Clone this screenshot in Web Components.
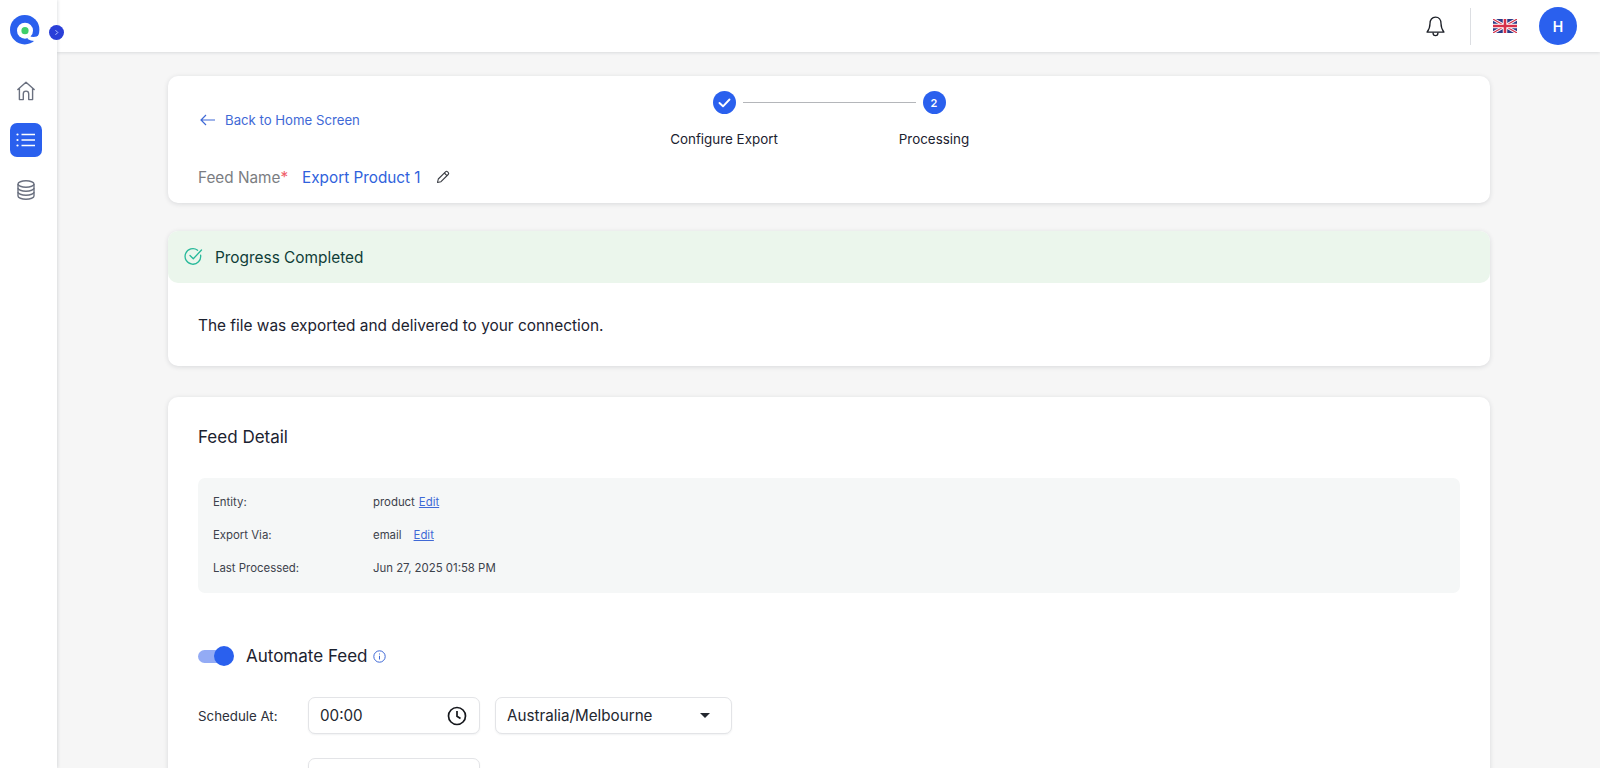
<!DOCTYPE html>
<html lang="en">
<head>
<meta charset="utf-8">
<title>Export Feed</title>
<style>
html,body{margin:0;height:768px;overflow:hidden;background:#f6f6f6;font-family:Inter,"Liberation Sans",sans-serif;color:#1c2230}
</style>
</head>
<body>
<app-shell>
  <app-sidebar slot="side"></app-sidebar>
  <app-topbar slot="top"></app-topbar>
  <header-card></header-card>
  <progress-card></progress-card>
  <detail-card></detail-card>
</app-shell>
<script>
function def(name, html){
  customElements.define(name, class extends HTMLElement{
    constructor(){super();this.attachShadow({mode:'open'}).innerHTML=html;}
  });
}
const card=':host{display:block;background:#fff;border-radius:10px;box-shadow:0 1px 5px rgba(20,30,50,.13)}';

def('app-shell',`<style>
:host{display:grid;grid-template-columns:57px 1fr;height:768px;overflow:hidden}
.main{display:flex;flex-direction:column;min-width:0;height:768px;overflow:hidden}
.content{display:flex;flex-direction:column;padding:24px 110px 0 111px}
::slotted(*){flex:none}
.content ::slotted(header-card){margin-bottom:28px}
.content ::slotted(progress-card){margin-bottom:31px}
</style>
<slot name="side"></slot>
<div class="main"><slot name="top"></slot><div class="content"><slot></slot></div></div>`);

def('app-sidebar',`<style>
:host{display:flex;flex-direction:column;align-items:center;width:57px;height:768px;background:#fff;box-shadow:1px 0 3px rgba(20,30,50,.12);position:relative;z-index:3;box-sizing:border-box;padding-top:15px}
.logo{width:30px;height:30px;margin-left:-7px;display:block}
.expand{position:absolute;left:49px;top:25px;width:15px;height:15px;border-radius:50%;background:#2a3fd8;display:grid;place-items:center}
.icon{display:grid;place-items:center;margin-left:-5px}
.home{margin-top:30px;width:32px;height:32px}
.active{margin-top:16px;width:32px;height:34px;background:#2a60ee;border-radius:7px;margin-left:-6px}
.db{margin-top:17px;width:32px;height:32px}
</style>
<svg class="logo" viewBox="0 0 30 30"><circle cx="14.700" cy="14.700" r="14.700" fill="#2a60ee"/><circle cx="15" cy="15.700" r="8" fill="#fff"/><path d="M19 20.500Q24 24 30 19.500L29.500 24.500Q24 27.500 17.500 24Z" fill="#fff"/><path d="M26.500 26.500 30 23V30H20Z" fill="#fff"/><circle cx="15" cy="15.700" r="3.600" fill="#3fcf6a"/></svg>
<div class="expand"><svg width="7" height="7" viewBox="0 0 7 7"><path d="M2.500 1.200 4.800 3.500 2.500 5.800" fill="none" stroke="#b9c6ff" stroke-width="1"/></svg></div>
<div class="icon home"><svg width="20" height="20" viewBox="0 0 20 20"><path d="M1.800 8.500 10 1.300l8.200 7.200M3.400 7.300V18.600H7.300V12.800a2.700 2.700 0 0 1 5.400 0V18.600H16.600V7.300" fill="none" stroke="#6b7180" stroke-width="1.400" stroke-linejoin="round" stroke-linecap="round"/></svg></div>
<div class="icon active"><svg width="20" height="16" viewBox="0 0 20 16"><path d="M5.500 2.500H19M5.500 8H19M5.500 13.500H19" stroke="#fff" stroke-width="1.300"/><circle cx="1.500" cy="2.500" r="1.100" fill="#fff"/><circle cx="1.500" cy="8" r="1.100" fill="#fff"/><circle cx="1.500" cy="13.500" r="1.100" fill="#fff"/></svg></div>
<div class="icon db"><svg width="18" height="20" viewBox="0 0 18 20" fill="none" stroke="#6b7180" stroke-width="1.400"><ellipse cx="9" cy="4" rx="8" ry="3.200"/><path d="M1 4v12c0 1.800 3.600 3.200 8 3.200s8-1.400 8-3.200V4"/><path d="M1 8c0 1.800 3.600 3.200 8 3.200S17 9.800 17 8M1 12c0 1.800 3.600 3.200 8 3.200s8-1.400 8-3.200"/></svg></div>`);

def('app-topbar',`<style>
:host{display:flex;align-items:center;justify-content:flex-end;flex:none;height:52px;background:#fff;box-shadow:0 1px 3px rgba(20,30,50,.12);box-sizing:border-box;padding-right:23px;position:relative;z-index:2}
.bell{display:block;margin-right:25px}
.sep{width:1px;height:37px;background:#dcdee2;margin-right:22px}
.flag{display:block;margin-right:22px}
.avatar{width:38px;height:38px;border-radius:50%;background:#2a60ee;color:#fff;display:grid;place-items:center;font-weight:600;font-size:14px}
</style>
<svg class="bell" width="19" height="21" viewBox="0 0 19 21" fill="none" stroke="#1d2028" stroke-width="1.300" stroke-linejoin="round"><path d="M9.500 1.200C6 1.200 4 4 4 7.500c0 4-1 6.200-3 8.600h17c-2-2.400-3-4.600-3-8.600 0-3.500-2-6.300-5.500-6.300z"/><path d="M7 16.400c0 2 1.100 3.200 2.500 3.200S12 18.400 12 16.400"/></svg>
<div class="sep"></div>
<svg class="flag" width="24" height="14" viewBox="0 0 24 14"><rect width="24" height="14" fill="#2b3a86"/><path d="M0 0 24 14M24 0 0 14" stroke="#fff" stroke-width="3"/><path d="M0 0 24 14M24 0 0 14" stroke="#d6304a" stroke-width="1.100"/><path d="M12 0V14M0 7H24" stroke="#fff" stroke-width="4.500"/><path d="M12 0V14M0 7H24" stroke="#d6304a" stroke-width="2.600"/></svg>
<div class="avatar">H</div>`);

def('step-tracker',`<style>
:host{display:block;width:320px;color:#1c2230}
.track{display:flex;align-items:center;padding:0 43.5px}
.dot{width:23px;height:23px;border-radius:50%;background:#2a60ee;color:#fff;display:grid;place-items:center;font-size:11px;font-weight:600;flex:none}
.line{flex:1;height:1px;background:#b4b6ba;margin:0 7px}
.labels{display:grid;grid-template-columns:110px 110px;justify-content:space-between;margin-top:16px;text-align:center;font-size:13.400px;line-height:18px}
.labels span{white-space:nowrap}
</style>
<div class="track"><div class="dot"><svg width="13" height="10" viewBox="0 0 13 10"><path d="M1.500 5 5 8.300 11.500 1.500" fill="none" stroke="#fff" stroke-width="1.900" stroke-linecap="round" stroke-linejoin="round"/></svg></div><div class="line"></div><div class="dot">2</div></div>
<div class="labels"><span>Configure Export</span><span>Processing</span></div>`);

def('header-card',`<style>${card}
:host{box-sizing:border-box;height:127px;padding:15px 30px 0}
.top{display:grid;grid-template-columns:471px 320px;align-items:center;height:56px}
.back{display:flex;align-items:center;gap:10px;color:#3f69d6;font-size:13.200px;padding:1px 0 0 2px}
.back svg{display:block}
.name{display:flex;align-items:center;margin-top:21px;font-size:15.300px;line-height:20px}
.lbl{color:#7b7d82}.req{color:#f0606a}
.val{color:#2f62dc;margin-left:14px}
.pen{margin-left:15px;display:block;margin-top:-3px}
</style>
<div class="top">
<div class="back"><svg width="15" height="12" viewBox="0 0 15 12" fill="none" stroke="#3f69d6" stroke-width="1.200"><path d="M15 6H1M6 1 1 6l5 5"/></svg><span>Back to Home Screen</span></div>
<step-tracker></step-tracker>
</div>
<div class="name"><span class="lbl">Feed Name<span class="req">*</span></span><span class="val">Export Product 1</span>
<svg class="pen" width="14" height="14" viewBox="0 0 14 14" fill="none" stroke="#3a3d44" stroke-width="1.100" stroke-linejoin="round"><path d="M1.500 12.500 2.300 9 9.500 1.800a1.500 1.500 0 0 1 2.100 0l.6.600a1.500 1.500 0 0 1 0 2.100L5 11.700z"/><path d="M8.300 3 11 5.700"/></svg></div>`);

def('progress-card',`<style>${card}
:host{height:135px}
.band{display:flex;align-items:center;height:52px;background:#ebf6ec;border-radius:10px;color:#0f3d38;font-size:15.400px;padding-left:16px;gap:12px;box-sizing:border-box}
.band svg{display:block;margin-top:-2px}
.msg{padding:33px 30px 0;font-size:15.400px;line-height:20px;color:#1c2230}
</style>
<div class="band"><svg width="19" height="19" viewBox="0 0 19 19" fill="none" stroke="#27b99a" stroke-width="1.300" stroke-linecap="round" stroke-linejoin="round"><path d="M16.600 8.200a7.800 7.800 0 1 1-3-5"/><path d="M6 8.500 9.300 11.800 17.500 3"/></svg><span>Progress Completed</span></div>
<div class="msg">The file was exported and delivered to your connection.</div>`);

def('feed-facts',`<style>
:host{display:grid;grid-template-columns:157px 1fr;grid-auto-rows:33px;align-items:center;box-sizing:border-box;height:115px;padding:7px 15px;background:#f5f7f7;border-radius:7px;font-size:11.400px;color:#3d424c}
a{color:#3f69d6;text-decoration:underline;margin-left:4px}
a.w{margin-left:12px}
span.v{margin-left:3px}
</style>
<span>Entity:</span><span class="v">product<a>Edit</a></span>
<span>Export Via:</span><span class="v">email<a class="w">Edit</a></span>
<span>Last Processed:</span><span class="v">Jun 27, 2025 01:58 PM</span>`);

def('toggle-switch',`<style>
:host{display:flex;align-items:center;width:36px;height:20px;flex:none}
.track{width:28px;height:13px;border-radius:7px;background:#93abf5}
.knob{width:20px;height:20px;border-radius:50%;background:#2a60ee;margin-left:-12px}
</style><div class="track"></div><div class="knob"></div>`);

def('field-box',`<style>
:host{display:flex;align-items:center;justify-content:space-between;box-sizing:border-box;height:37px;border:1px solid #e3e4e7;border-radius:7px;background:#fff;padding:0 12px 0 11px;font-size:15.200px;color:#23272f;box-shadow:0 1px 2px rgba(20,30,50,.06);flex:none}
</style><slot></slot>`);

def('detail-card',`<style>${card}
:host{padding:30px 30px 40px}
h2{margin:0 0 31px;font-weight:400;font-size:17px;line-height:20px;color:#1c2230}
.auto{display:flex;align-items:center;margin-top:51px;font-size:17px;line-height:24px}
.auto span{margin-left:12px}
.auto svg{margin-left:5px;display:block}
.sched{display:flex;align-items:center;margin-top:29px}
.sched label{width:110px;font-size:13.300px;color:#2c303a;flex:none}
.time{width:172px}
.tz{width:237px;margin-left:15px}
.caret{width:0;height:0;border-left:5px solid transparent;border-right:5px solid transparent;border-top:5px solid #23272f;margin-right:9px}
.next{margin:24px 0 0 110px;width:172px}
svg{display:block}
</style>
<h2>Feed Detail</h2>
<feed-facts></feed-facts>
<div class="auto"><toggle-switch></toggle-switch><span>Automate Feed</span><svg width="13" height="13" viewBox="0 0 13 13" fill="none" stroke="#3f69d6" stroke-width="1"><circle cx="6.500" cy="6.500" r="5.700"/><path d="M6.500 5.800V9.500M6.500 3.500V4.500"/></svg></div>
<div class="sched"><label>Schedule At:</label>
<field-box class="time"><span>00:00</span><svg width="20" height="20" viewBox="0 0 20 20" fill="none" stroke="#15171c" stroke-width="1.700"><circle cx="10" cy="10" r="8.500"/><path d="M10 5V10.300L13.500 12.500"/></svg></field-box>
<field-box class="tz"><span>Australia/Melbourne</span><div class="caret"></div></field-box></div>
<field-box class="next"></field-box>`);
</script>
</body>
</html>
